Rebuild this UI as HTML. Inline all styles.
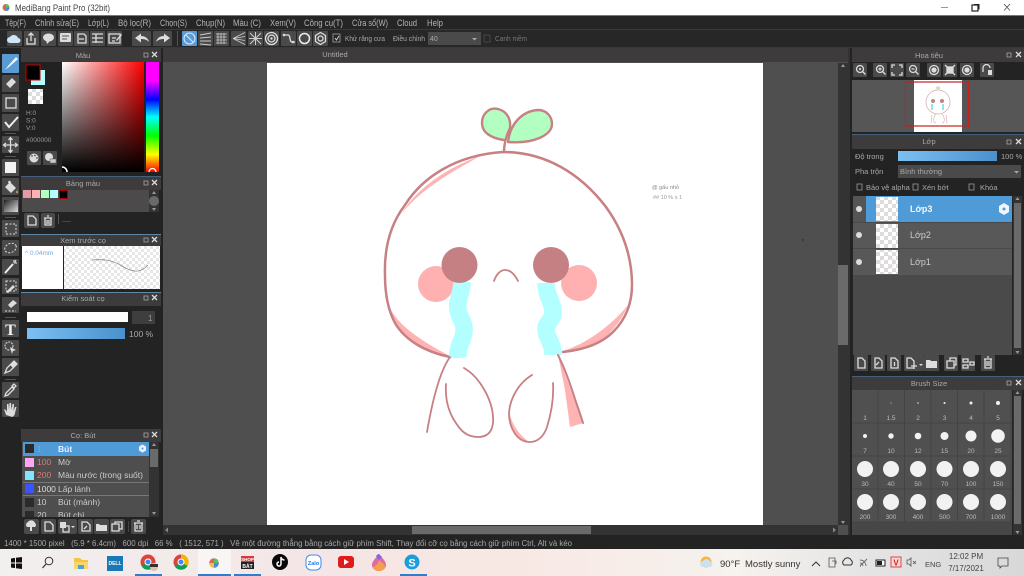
<!DOCTYPE html>
<html><head><meta charset="utf-8"><title>MediBang Paint Pro</title>
<style>
html,body{margin:0;padding:0;background:#222;width:1024px;height:576px;overflow:hidden}
svg{display:block;filter:blur(.3px)}
text{font-family:"Liberation Sans","Noto Sans CJK SC",sans-serif;font-size:8px;fill:#aaa}
.m{font-size:9px;fill:#b4b4b4}
.h{font-size:7.5px;fill:#aaa;text-anchor:middle}
.l{font-size:7.5px;fill:#a8a8a8}
.b{fill:#4a4a4a}
.i{fill:none;stroke:#ddd;stroke-width:1.3}
.f{fill:#ddd}
.t{font-size:6.5px;fill:#bbb;text-anchor:middle}
.c{fill:#f2f2f2}
.e{fill:#3d3b3b}
.o{fill:none;stroke:#c78083;stroke-linecap:round;stroke-linejoin:round}
</style></head><body>
<svg width="1024" height="576" viewBox="0 0 1024 576" xmlns="http://www.w3.org/2000/svg">
<defs>
<pattern id="ck" width="8" height="8" patternUnits="userSpaceOnUse"><rect width="8" height="8" fill="#fff"/><rect width="4" height="4" fill="#ddd"/><rect x="4" y="4" width="4" height="4" fill="#ddd"/></pattern>
<pattern id="ck2" width="6" height="6" patternUnits="userSpaceOnUse"><rect width="6" height="6" fill="#fff"/><rect width="3" height="3" fill="#e6e6e6"/><rect x="3" y="3" width="3" height="3" fill="#e6e6e6"/></pattern>
<linearGradient id="wr" x1="0" x2="1" y1="0" y2="0"><stop offset="0" stop-color="#fff"/><stop offset="1" stop-color="#f00"/></linearGradient>
<linearGradient id="kb" x1="0" x2="0" y1="0" y2="1"><stop offset="0" stop-color="#000" stop-opacity="0"/><stop offset="1" stop-color="#000"/></linearGradient>
<linearGradient id="hue" x1="0" x2="0" y1="0" y2="1"><stop offset="0" stop-color="#f0f"/><stop offset=".17" stop-color="#f0f"/><stop offset=".34" stop-color="#00f"/><stop offset=".5" stop-color="#0ff"/><stop offset=".67" stop-color="#0f0"/><stop offset=".84" stop-color="#ff0"/><stop offset="1" stop-color="#f00"/></linearGradient>
<linearGradient id="bl" x1="0" x2="1" y1="0" y2="0"><stop offset="0" stop-color="#7cc0f2"/><stop offset="1" stop-color="#4a90cc"/></linearGradient>
<linearGradient id="gr" x1="0" x2="1" y1="0" y2="1"><stop offset="0" stop-color="#222"/><stop offset="1" stop-color="#ddd"/></linearGradient>
<linearGradient id="tb" x1="0" x2="1" y1="0" y2="0"><stop offset="0" stop-color="#f2efef"/><stop offset=".3" stop-color="#f4e6e6"/><stop offset=".5" stop-color="#f8e8e4"/><stop offset=".72" stop-color="#f6f2ee"/><stop offset=".85" stop-color="#e4e4e4"/><stop offset="1" stop-color="#d8d8d8"/></linearGradient>
</defs>

<!-- base -->
<rect width="1024" height="576" fill="#232323"/>
<!-- title bar -->
<rect width="1024" height="15" fill="#fff"/>
<rect y="15" width="1024" height="1" fill="#777"/>
<circle cx="6" cy="7.5" r="3.5" fill="#e2644a"/><path d="M6 4a3.5 3.5 0 0 1 3.5 3.5H6z" fill="#5cbf6a"/><path d="M6 7.5h3.5A3.5 3.5 0 0 1 6 11z" fill="#3e8fd8"/>
<text x="15" y="11" style="font-size:9px;fill:#444" textLength="95" lengthAdjust="spacingAndGlyphs">MediBang Paint Pro (32bit)</text>
<path d="M941 7.5h7" stroke="#999" stroke-width="1"/>
<rect x="972" y="5" width="6" height="6" fill="none" stroke="#222" stroke-width="1.2"/><path d="M974 4.5h5v5" fill="none" stroke="#222"/>
<path d="M1004 4l6 6.500M1010 4l-6 6.500" stroke="#555" stroke-width=".9"/>

<!-- menu -->
<rect y="16" width="1024" height="13" fill="#252525"/>
<rect y="29" width="1024" height="1" fill="#3a3a3a"/>
<text class="m" x="5" y="26" textLength="21" lengthAdjust="spacingAndGlyphs">Tệp(F)</text><text class="m" x="35" y="26" textLength="44" lengthAdjust="spacingAndGlyphs">Chỉnh sửa(E)</text><text class="m" x="88" y="26" textLength="21" lengthAdjust="spacingAndGlyphs">Lớp(L)</text><text class="m" x="118" y="26" textLength="33" lengthAdjust="spacingAndGlyphs">Bộ lọc(R)</text><text class="m" x="160" y="26" textLength="27" lengthAdjust="spacingAndGlyphs">Chọn(S)</text><text class="m" x="196" y="26" textLength="29" lengthAdjust="spacingAndGlyphs">Chụp(N)</text><text class="m" x="233" y="26" textLength="28" lengthAdjust="spacingAndGlyphs">Màu (C)</text><text class="m" x="270" y="26" textLength="26" lengthAdjust="spacingAndGlyphs">Xem(V)</text><text class="m" x="304" y="26" textLength="39" lengthAdjust="spacingAndGlyphs">Công cụ(T)</text><text class="m" x="352" y="26" textLength="36" lengthAdjust="spacingAndGlyphs">Cửa sổ(W)</text><text class="m" x="397" y="26" textLength="20" lengthAdjust="spacingAndGlyphs">Cloud</text><text class="m" x="427" y="26" textLength="16" lengthAdjust="spacingAndGlyphs">Help</text>

<!-- toolbar -->
<rect y="30" width="1024" height="17" fill="#272727"/>
<rect x="7" y="31" width="15" height="15" class="b" rx="1"/><path d="M10 43a3 3 0 0 1 0-6 4.500 4.500 0 0 1 8 1 2.500 2.500 0 0 1 0 5z" fill="#cfe4f5"/>
<rect x="24" y="31" width="15" height="15" class="b" rx="1"/><path d="M27 38v6h8v-6M31 41v-8M28.500 35.500l2.500-2.500 2.500 2.500" class="i"/>
<rect x="41" y="31" width="15" height="15" class="b" rx="1"/><ellipse cx="48.500" cy="37.500" rx="5.500" ry="4" class="f"/><path d="M46 40l1 4 3-3z" class="f"/>
<rect x="58" y="31" width="15" height="15" class="b" rx="1"/><rect x="60" y="33" width="11" height="9" class="f" rx="1"/><path d="M62 36h7M62 39h5" stroke="#555"/>
<rect x="74" y="31" width="15" height="15" class="b" rx="1"/><path d="M78 34h6l2 2v7h-8zM79 39h5" class="i" stroke-width="1"/>
<rect x="90" y="31" width="15" height="15" class="b" rx="1"/><path d="M92 34h11M92 38h11M92 42h11M96 34v9" class="i" stroke-width="1"/>
<rect x="107" y="31" width="15" height="15" class="b" rx="1"/><path d="M109 34h11v9h-11zM112 38h4M112 41h3" class="i" stroke-width="1"/><path d="M116 40l5-6 1 1-5 6z" class="f"/>
<rect x="132" y="31" width="19" height="15" class="b" rx="1"/><path d="M135 38l6-4.500v2.500c4 0 7 2 8 6-2-2-4-3-8-3v3.500z" class="f"/>
<rect x="153" y="31" width="19" height="15" class="b" rx="1"/><path d="M170 38l-6-4.500v2.500c-4 0-7 2-8 6 2-2 4-3 8-3v3.500z" class="f"/>
<rect x="177" y="31" width="1" height="15" fill="#456"/>
<rect x="182" y="31" width="15" height="15" fill="#5b9bd5" rx="1"/><circle cx="189.500" cy="38.500" r="5.500" fill="none" stroke="#dceaf7"/><path d="M185.500 34.500l8 8" stroke="#dceaf7"/>
<rect x="198" y="31" width="15" height="15" class="b" rx="1"/><path d="M200 35l11-2M200 38l11-1M200 41l11 0M200 44l11 1" stroke="#ccc"/>
<rect x="214" y="31" width="15" height="15" class="b" rx="1"/><path d="M216 34h11M216 37h11M216 40h11M216 43h11M218 33v11M221 33v11M224 33v11" stroke="#ccc" stroke-width=".8"/>
<rect x="231" y="31" width="15" height="15" class="b" rx="1"/><path d="M233 38.500l12-6M233 38.500l12-2M233 38.500l12 2M233 38.500l12 6" stroke="#ccc" stroke-width=".8"/>
<rect x="248" y="31" width="15" height="15" class="b" rx="1"/><path d="M250 33l11 11M261 33l-11 11M255.500 32v13M249 38.500h13" stroke="#ccc"/>
<rect x="264" y="31" width="15" height="15" class="b" rx="1"/><circle cx="271.500" cy="38.500" r="6" class="i" stroke-width=".9"/><circle cx="271.500" cy="38.500" r="3.500" class="i" stroke-width=".9"/><circle cx="271.500" cy="38.500" r="1.200" class="f"/>
<rect x="281" y="31" width="15" height="15" class="b" rx="1"/><path d="M283 35h5c3 0 1 7 4 7h3" class="i"/><circle cx="284" cy="35" r="1.300" class="f"/><circle cx="293" cy="42" r="1.300" class="f"/>
<rect x="297" y="31" width="15" height="15" class="b" rx="1"/><circle cx="304.500" cy="38.500" r="5" fill="none" stroke="#eee" stroke-width="1.500"/>
<rect x="313" y="31" width="15" height="15" class="b" rx="1"/><path d="M320.500 32.500l5 3v6l-5 3-5-3v-6z" class="i"/><circle cx="320.500" cy="38.500" r="2.500" class="i"/>
<rect x="333" y="34" width="7" height="8" fill="none" stroke="#888"/><path d="M335 38l1.500 2 2.500-4" stroke="#ccc" fill="none"/>
<text x="345" y="41" class="l" textLength="40" lengthAdjust="spacingAndGlyphs">Khử răng cưa</text><text x="393" y="41" class="l" textLength="32" lengthAdjust="spacingAndGlyphs">Điều chỉnh</text>
<rect x="428" y="32" width="53" height="13" fill="#4a4a4a"/><text x="430" y="41" style="font-size:7px;fill:#aaa">40</text><path d="M472 38h5l-2.500 2.500z" fill="#aaa"/>
<rect x="484" y="35" width="6" height="7" fill="none" stroke="#444"/><text x="495" y="41" style="font-size:7.500px;fill:#777" textLength="32" lengthAdjust="spacingAndGlyphs">Canh mềm</text>
<rect y="47" width="1024" height="1" fill="#393939"/>

<!-- center area -->
<rect x="163" y="48" width="687" height="487" fill="#4f4f4f"/>
<rect x="163" y="48" width="687" height="14" fill="#3d3b3b"/>
<text class="h" x="335" y="57">Untitled</text>
<rect x="267" y="63" width="496" height="462" fill="#fff"/>
<rect x="848" y="48" width="2" height="487" fill="#333"/>
<rect x="838" y="63" width="10" height="462" fill="#333"/>
<rect x="838" y="265" width="10" height="80" fill="#6a6a6a"/>
<path d="M843 64l-2 3h4z" fill="#999"/><path d="M843 524l-2-3h4z" fill="#999"/>
<rect x="163" y="525" width="675" height="10" fill="#333"/>
<rect x="412" y="526" width="179" height="8" fill="#6a6a6a"/>
<path d="M165 530l3-2.500v5z" fill="#888"/><path d="M836 530l-3-2.500v5z" fill="#888"/>
<circle cx="803" cy="240" r=".7" fill="#222"/>

<!-- drawing -->
<g>
<!-- pink shades -->
<path d="M387 300C392 318 408 334 450 356 426 352 404 340 394 322 390 314 387 306 387 300z" fill="#ffb3b3"/>
<path d="M402 213C412 195 440 170 480 156 460 168 425 185 402 213z" fill="#ffb3b3"/>
<path d="M562 351C585 345 612 325 628 305 622 320 612 332 600 342 588 348 575 350 562 351z" fill="#ffb3b3"/>
<path d="M558 355l25 68-13 4-5-37z" fill="#ffb3b3"/>
<path d="M509 412c0 16 6 28 22 31-10-6-18-16-22-31z" fill="#ffb3b3"/>
<!-- leaves -->
<path d="M505 140c-14-2-23-8-23-17 0-10 8-16 16-14 8 2 13 9 12 18z" fill="#b3ffc1"/>
<path d="M508 142c2-18 14-31 30-32 9 0 14 7 14 14 0 11-18 20-44 18z" fill="#b3ffc1"/>
<path class="o" stroke-width="2.400" d="M504 140c-14-2-22-8-22-17 0-10 8-16 16-14 8 2 13 9 12 18"/>
<path class="o" stroke-width="2.400" d="M508 142c2-18 14-31 30-32 9 0 14 7 14 14 0 11-18 20-44 18z"/>
<path class="o" stroke-width="2.400" d="M504 152c0-9 2-16 6-24"/>
<!-- head -->
<path class="o" stroke-width="2.500" d="M450 357C425 352 405 340 395 323 388 310 385 295 385 275 384 245 392 222 405 205 422 178 455 155 503 152 545 152 580 173 606 207 624 232 632 258 632 285 632 305 625 320 613 332 600 345 582 350 563 352"/>
<!-- cheeks -->
<circle cx="436" cy="284" r="18" fill="#ffb0b0"/>
<circle cx="579" cy="283" r="18" fill="#ffb0b0"/>
<!-- tears -->
<path d="M462 282C462 295 456 300 458 310 460 320 465 322 464 332 463 342 457 345 458 358" fill="none" stroke="#b3ffff" stroke-width="17.500"/>
<path d="M546 283C546 296 553 302 553 312 553 321 546 322 546 329 546 338 553 342 553 355" fill="none" stroke="#b3ffff" stroke-width="17.500"/>
<!-- eyes -->
<circle cx="459.500" cy="265" r="18" fill="#c58084"/>
<circle cx="551" cy="265" r="18" fill="#c58084"/>
<path class="o" stroke-width="1.800" d="M494 281c2-6 6-11 11-11 6 0 10 5 13 11"/>
<!-- legs -->
<path class="o" stroke-width="1.800" d="M450 357c-10 14-17 40-23 75"/>
<path class="o" stroke-width="1.800" d="M446 384c-1 15 2 26 8 36 6 10 12 17 24 17 9 0 14-5 15-14 1-14-4-26-11-37-5-8-11-14-18-18"/>
<path class="o" stroke-width="1.800" d="M532 375c-12 7-22 22-23 38 0 15 8 29 21 29 8 0 14-6 17-15 4-13 7-28 6-44"/>
<path class="o" stroke-width="2" d="M558 355c6 12 12 28 17 44 3 9 6 17 8 24"/>
<text x="652" y="189" style="font-size:5.500px;fill:#888">@ gấu nhỏ</text>
<text x="653" y="199" style="font-size:5.500px;fill:#999">## 10 % s 1</text>
</g>

<!-- left tools -->
<rect x="2" y="54" width="17" height="19" fill="#5b9bd5" rx="1"/><path d="M5 70l3-4 8-9 2 2-9 8z" fill="#f2f6fa"/>
<rect x="2" y="75" width="17" height="17" class="b" rx="1"/><path d="M6 84l6-6 4 4-6 6z" class="f"/>
<rect x="2" y="94" width="17" height="18" class="b" rx="1"/><rect x="6" y="98" width="10" height="10" class="i"/>
<rect x="2" y="114" width="17" height="17" class="b" rx="1"/><path d="M5 122l4 5 9-10" fill="none" stroke="#eee" stroke-width="2"/>
<rect x="5" y="133" width="11" height="1" fill="#555"/>
<rect x="2" y="136" width="17" height="17" class="b" rx="1"/><path d="M10.500 137.500v15M3.500 145h14M8.500 140l2-2.500 2 2.500M8.500 150l2 2.500 2-2.500M6 143l-2.500 2 2.500 2M15 143l2.500 2-2.500 2" class="i"/>
<rect x="5" y="156" width="11" height="1" fill="#555"/>
<rect x="2" y="159" width="17" height="17" class="b" rx="1"/><rect x="5" y="162" width="11" height="11" class="c"/>
<rect x="2" y="178" width="17" height="17" class="b" rx="1"/><path d="M5 187l5-5 6 6-5 5zM8 183c0-3 3-3 3 0" class="f"/><path d="M17 190c1 2 1 3 0 3s-1-1 0-3z" fill="#e9b565"/>
<rect x="2" y="197" width="17" height="18" class="b" rx="1"/><rect x="4" y="200" width="14" height="12" fill="url(#gr)"/>
<rect x="5" y="217" width="11" height="1" fill="#555"/>
<rect x="2" y="220" width="17" height="17" class="b" rx="1"/><rect x="6" y="224" width="10" height="10" fill="none" stroke="#ddd" stroke-dasharray="2 1.500"/>
<rect x="2" y="240" width="17" height="16" class="b" rx="1"/><ellipse cx="10.500" cy="248" rx="6" ry="4.500" fill="none" stroke="#ddd" stroke-dasharray="2 1.500" transform="rotate(-25 10.500 248)"/>
<rect x="2" y="259" width="17" height="16" class="b" rx="1"/><path d="M5 273l8-9" stroke="#eee" stroke-width="2"/><path d="M14 260v3M17 263h-3M16 260l-1 2" stroke="#eee"/>
<rect x="2" y="278" width="17" height="16" class="b" rx="1"/><rect x="6" y="281" width="10" height="10" fill="none" stroke="#ddd" stroke-dasharray="2 1.500"/><path d="M6 292l7-7 2 2-7 6z" class="f"/>
<rect x="2" y="297" width="17" height="16" class="b" rx="1"/><path d="M8 305l5-5 4 3-6 5z" class="f"/><path d="M5 311h11" stroke="#ddd" stroke-dasharray="2 1.500"/>
<rect x="5" y="317" width="11" height="1" fill="#555"/>
<rect x="2" y="320" width="17" height="17" class="b" rx="1"/><text x="10.500" y="335" style="font-family:'Liberation Serif',serif;font-size:16px;font-weight:bold;fill:#f2f2f2;text-anchor:middle">T</text>
<rect x="2" y="340" width="17" height="16" class="b" rx="1"/><circle cx="9" cy="346" r="4" fill="none" stroke="#ddd" stroke-dasharray="2 1"/><path d="M10 347l6 3-3 1-1 3z" class="f"/>
<rect x="2" y="358" width="17" height="18" class="b" rx="1"/><path d="M5 373l2-5 7-7 3 3-7 7z" class="i"/><path d="M10 365l4-4 3 3-4 4z" class="f"/>
<rect x="5" y="379" width="11" height="1" fill="#555"/>
<rect x="2" y="382" width="17" height="16" class="b" rx="1"/><path d="M5 396l1-3 6-6 2 2-6 6zM12 386l2-2 2 2-2 2z" class="i"/>
<rect x="2" y="400" width="17" height="17" class="b" rx="1"/><path d="M6 415l-2-6 2 1 1 2 0-8h1.500l.5 6 .5-7h1.500l.5 7 1-6h1.500l-.5 7 1.500-4h1.500l-2 8-2 2z" class="f"/>

<!-- Màu panel -->
<rect x="21" y="48" width="140" height="14" class="e"/>
<text class="h" x="83" y="58">Màu</text>
<path d="M144 53h4v4h-4z" fill="none" stroke="#aaa" stroke-width=".8"/><path d="M152 52l5 5M157 52l-5 5" stroke="#ddd" stroke-width="1.300"/>
<rect x="21" y="62" width="140" height="114" fill="#222"/>
<rect x="31" y="70" width="14" height="15" fill="#b3ffff"/>
<rect x="26" y="65" width="14" height="15" fill="#000" stroke="#c00" stroke-width="1"/>
<rect x="28" y="89" width="15" height="15" fill="url(#ck)"/>
<text x="26" y="115" style="font-size:6.500px;fill:#999">H:0</text><text x="26" y="122.500" style="font-size:6.500px;fill:#999">S:0</text><text x="26" y="130" style="font-size:6.500px;fill:#999">V:0</text>
<text x="26" y="142" style="font-size:6.500px;fill:#999">#000000</text>
<rect x="27" y="151" width="14" height="14" class="b" rx="1"/><circle cx="34" cy="158" r="4.500" class="f"/><circle cx="32" cy="156" r=".9" fill="#555"/><circle cx="35" cy="155.500" r=".9" fill="#555"/><circle cx="37" cy="158" r=".9" fill="#555"/>
<rect x="43" y="151" width="14" height="14" class="b" rx="1"/><circle cx="49" cy="157" r="4" class="f"/><rect x="50" y="159" width="6" height="4" fill="#ccc" stroke="#555" stroke-width=".5"/>
<rect x="62" y="62" width="82" height="110" fill="url(#wr)"/><rect x="62" y="62" width="82" height="110" fill="url(#kb)"/>
<path d="M62 167a5 5 0 0 1 5 5" fill="none" stroke="#fff" stroke-width="1.500"/>
<rect x="146" y="62" width="13" height="110" fill="url(#hue)"/>
<path d="M149 172a3.500 3.500 0 0 1 7 0" fill="none" stroke="#fff" stroke-width="1.300"/>
<rect x="21" y="176" width="140" height="1" fill="#44607a"/>

<!-- Palette -->
<rect x="21" y="177" width="140" height="13" class="e"/>
<text class="h" x="83" y="186">Bảng màu</text>
<path d="M144 181h4v4h-4z" fill="none" stroke="#aaa" stroke-width=".8"/><path d="M152 180l5 5M157 180l-5 5" stroke="#ddd" stroke-width="1.300"/>
<rect x="22" y="190" width="127" height="22" fill="#4c4a4a"/>
<rect x="23" y="190" width="8" height="8" fill="#e39aa2"/><rect x="32" y="190" width="8" height="8" fill="#ffb0b0"/><rect x="41" y="190" width="8" height="8" fill="#b3ffc1"/><rect x="50" y="190" width="8" height="8" fill="#b3ffff"/><rect x="59.500" y="190.500" width="8" height="8" fill="#000" stroke="#a00"/>
<rect x="149" y="190" width="10" height="22" fill="#333"/><circle cx="154" cy="201" r="5" fill="#6a6a6a"/><path d="M154 191l-2 3h4zM154 211l-2-3h4z" fill="#999"/>
<rect x="24" y="213" width="15" height="15" class="b" rx="2"/><path d="M28 216h5l3 3v6h-8z" class="i"/>
<rect x="41" y="213" width="14" height="15" class="b" rx="2"/><path d="M44 218h8M45 218v7h6v-7M47 216h2M47 220v4M49 220v4" class="i" stroke-width="1"/>
<rect x="58" y="214" width="1" height="10" fill="#555"/><rect x="62" y="221" width="9" height="1" fill="#444"/>
<rect x="21" y="234" width="140" height="1" fill="#5d87a8"/>

<!-- Preview -->
<rect x="21" y="235" width="140" height="11" class="e"/>
<text class="h" x="83" y="243">Xem trước cọ</text>
<path d="M144 238h4v4h-4z" fill="none" stroke="#aaa" stroke-width=".8"/><path d="M152 237l5 5M157 237l-5 5" stroke="#ddd" stroke-width="1.300"/>
<rect x="22" y="246" width="41" height="43" fill="#fff"/>
<rect x="64" y="246" width="96" height="43" fill="url(#ck2)"/>
<text x="25" y="255" style="font-size:6.500px;fill:#7aa9d4">^ 0.04mm</text>
<path d="M92 260c12-1 20 0 30 6 10 6 18 8 26-1" fill="none" stroke="#8a8a8a" stroke-width=".8"/>
<rect x="21" y="292" width="140" height="1" fill="#5d87a8"/>

<!-- Control -->
<rect x="21" y="293" width="140" height="13" class="e"/>
<text class="h" x="83" y="301">Kiểm soát cọ</text>
<path d="M144 296h4v4h-4z" fill="none" stroke="#aaa" stroke-width=".8"/><path d="M152 295l5 5M157 295l-5 5" stroke="#ddd" stroke-width="1.300"/>
<rect x="27" y="312" width="101" height="10" fill="#fff"/>
<rect x="132" y="311" width="23" height="13" fill="#3e3e3e"/><text x="148" y="321" style="font-size:8px;fill:#999">1</text>
<rect x="27" y="328" width="98" height="11" fill="url(#bl)"/>
<text x="129" y="337" style="font-size:8.500px;fill:#aaa">100 %</text>

<!-- Brush list -->
<rect x="21" y="429" width="140" height="13" class="e"/>
<text class="h" x="83" y="438">Cọ: Bút</text>
<path d="M144 433h4v4h-4z" fill="none" stroke="#aaa" stroke-width=".8"/><path d="M152 432l5 5M157 432l-5 5" stroke="#ddd" stroke-width="1.300"/>
<rect x="22" y="442" width="127" height="75" fill="#4e4e4e"/>
<rect x="23" y="442" width="126" height="14" fill="#4f9bd8"/>
<rect x="25" y="444" width="9" height="9" fill="#2b2b2b"/><text x="37" y="452" style="font-size:8.500px;fill:#e878a8">1</text><text x="58" y="452" style="font-size:8.500px;font-weight:bold;fill:#eef">Bút</text>
<path d="M142.500 445l3 1.800v3.400l-3 1.800-3-1.800v-3.400z" fill="#eef" stroke="#eef"/><circle cx="142.500" cy="448.500" r="1" fill="#4f9bd8"/>
<rect x="25" y="458" width="9" height="9" fill="#ffa6f4"/><text x="37" y="465" style="font-size:8.500px;fill:#d97a72">100</text><text x="58" y="465" style="font-size:8.500px;fill:#ccc">Mờ</text>
<rect x="25" y="471" width="9" height="9" fill="#84e4ff"/><text x="37" y="478" style="font-size:8.500px;fill:#e07a72">200</text><text x="58" y="478" style="font-size:8.500px;fill:#ccc">Màu nước (trong suốt)</text>
<rect x="23" y="482" width="126" height="1" fill="#777"/>
<rect x="25" y="484" width="9" height="9" fill="#3a55ff"/><text x="37" y="492" style="font-size:8.500px;fill:#ddd">1000</text><text x="58" y="492" style="font-size:8.500px;fill:#ccc">Lấp lánh</text>
<rect x="23" y="495" width="126" height="1" fill="#777"/>
<rect x="25" y="498" width="9" height="9" fill="#2b2b2b"/><text x="37" y="505" style="font-size:8.500px;fill:#ccc">10</text><text x="58" y="505" style="font-size:8.500px;fill:#ccc">Bút (mảnh)</text>
<rect x="25" y="511" width="9" height="9" fill="#2b2b2b"/><text x="37" y="518" style="font-size:8.500px;fill:#ccc">20</text><text x="58" y="518" style="font-size:8.500px;fill:#ccc">Bút chì</text>
<rect x="149" y="442" width="10" height="75" fill="#333"/><rect x="150" y="449" width="8" height="18" fill="#6a6a6a"/><path d="M154 443l-2 3h4zM154 515l-2-3h4z" fill="#999"/>
<rect x="21" y="517" width="140" height="18" fill="#232323"/>
<rect x="24" y="519" width="15" height="15" class="b" rx="2"/><path d="M27 527a3 3 0 0 1 1-5 4 4 0 0 1 7 1 2.500 2.500 0 0 1 0 4h-3v4h-2v-4z" class="f"/>
<rect x="41" y="519" width="15" height="15" class="b" rx="2"/><path d="M45 522h5l3 3v6h-8z" class="i" stroke-width="1"/>
<rect x="58" y="519" width="19" height="15" class="b" rx="2"/><rect x="60" y="522" width="6" height="6" class="f"/><rect x="63" y="526" width="6" height="6" class="i" stroke-width=".8"/><path d="M71 526h4l-2 2z" class="f"/>
<rect x="78" y="519" width="15" height="15" class="b" rx="2"/><path d="M82 522h5l3 3v6h-8zM84 529l3-3" class="i" stroke-width="1"/>
<rect x="94" y="519" width="15" height="15" class="b" rx="2"/><path d="M96 524h3l1 1h7v6H96z" class="f"/>
<rect x="110" y="519" width="15" height="15" class="b" rx="2"/><path d="M112 524h7v7h-7zM115 524v-2h7v7h-3" class="i" stroke-width=".9"/>
<rect x="128" y="521" width="1" height="11" fill="#444"/>
<rect x="131" y="519" width="15" height="15" class="b" rx="2"/><path d="M134 523h9M135 523v8h7v-8M137 521h3M137 525v4M140 525v4" class="i" stroke-width="1"/>

<!-- Right: Navigator -->
<rect x="850" y="48" width="174" height="487" fill="#232323"/>
<rect x="852" y="48" width="172" height="14" class="e"/>
<text class="h" x="929" y="58">Hoa tiêu</text>
<path d="M1007 53h4v4h-4z" fill="none" stroke="#aaa" stroke-width=".8"/><path d="M1016 52l5 5M1021 52l-5 5" stroke="#ddd" stroke-width="1.300"/>
<g class="i" stroke-width="1">
<rect x="853" y="63" width="14" height="14" fill="#4a4a4a" stroke="none" rx="1"/><circle cx="860" cy="69" r="3.500"/><path d="M862.500 71.500l3 3M859 69h2M860 68v2"/>
<rect x="873" y="63" width="14" height="14" fill="#4a4a4a" stroke="none" rx="1"/><circle cx="880" cy="69" r="3.500"/><path d="M882.500 71.500l3 3M878.500 69h3M880 67.500v3"/>
<rect x="890" y="63" width="14" height="14" fill="#4a4a4a" stroke="none" rx="1"/><path d="M892 68v-3h3M902 68v-3h-3M892 72v3h3M902 72v3h-3"/>
<rect x="906" y="63" width="14" height="14" fill="#4a4a4a" stroke="none" rx="1"/><circle cx="913" cy="69" r="3.500"/><path d="M915.500 71.500l3 3M911.500 69h3"/>
<rect x="927" y="63" width="14" height="14" fill="#4a4a4a" stroke="none" rx="1"/><circle cx="934" cy="70" r="4.500"/><circle cx="934" cy="70" r="2" fill="#ddd"/>
<rect x="943" y="63" width="14" height="14" fill="#4a4a4a" stroke="none" rx="1"/><rect x="947" y="67" width="6" height="6" fill="#ddd"/><path d="M945 65l2 2M955 65l-2 2M945 75l2-2M955 75l-2-2"/>
<rect x="960" y="63" width="14" height="14" fill="#4a4a4a" stroke="none" rx="1"/><circle cx="967" cy="70" r="4.500"/><circle cx="967" cy="70" r="2" fill="#ddd"/>
<rect x="980" y="63" width="14" height="14" fill="#4a4a4a" stroke="none" rx="1"/><path d="M983 72v-4a3.500 3.500 0 0 1 7 0"/><rect x="988" y="70" width="4" height="5" fill="#ddd" stroke="none"/>
</g>
<rect x="852" y="80" width="172" height="52" fill="#565656"/>
<rect x="914" y="80" width="48" height="52" fill="#fff"/>
<rect x="905.500" y="82" width="63" height="44" fill="none" stroke="#c82020" stroke-width="1.200"/>
<circle cx="938" cy="102" r="12" fill="none" stroke="#d8a8aa" stroke-width=".7"/>
<path d="M935 88l3 2 3-2-3-2z" fill="#bfe6c6"/>
<circle cx="933" cy="101" r="2" fill="#c58084"/><circle cx="942" cy="101" r="2" fill="#c58084"/><path d="M932 104v6M943 104v6" stroke="#8fe8ea" stroke-width="2"/>
<path d="M932 115l-1 8M936 114c-3 3-3 9 0 9M942 114c3 3 3 9 0 9M946 115l1 8" stroke="#d8a8aa" fill="none" stroke-width=".6"/>

<!-- Layers -->
<rect x="852" y="134" width="172" height="1" fill="#44607a"/>
<rect x="852" y="135" width="172" height="14" class="e"/>
<text class="h" x="929" y="144">Lớp</text>
<path d="M1007 140h4v4h-4z" fill="none" stroke="#aaa" stroke-width=".8"/><path d="M1016 139l5 5M1021 139l-5 5" stroke="#ddd" stroke-width="1.300"/>
<text x="855" y="159" class="l">Độ trong</text>
<rect x="898" y="151" width="99" height="10" fill="url(#bl)"/>
<text x="1001" y="159" class="l">100 %</text>
<text x="855" y="174" class="l">Pha trộn</text>
<rect x="898" y="165" width="123" height="13" fill="#4a4a4a"/>
<text x="900" y="174" class="l">Bình thường</text><path d="M1014 171h5l-2.500 2.500z" fill="#aaa"/>
<rect x="857" y="184" width="5" height="6" fill="none" stroke="#999" stroke-width=".8"/><text x="866" y="190" class="l">Bảo vệ alpha</text>
<rect x="913" y="184" width="5" height="6" fill="none" stroke="#999" stroke-width=".8"/><text x="922" y="190" class="l">Xén bớt</text>
<rect x="969" y="184" width="5" height="6" fill="none" stroke="#999" stroke-width=".8"/><text x="980" y="190" class="l">Khóa</text>
<rect x="853" y="196" width="159" height="159" fill="#4a4a4a"/>
<rect x="853" y="196" width="13" height="26" fill="#555"/><rect x="866" y="196" width="146" height="26" fill="#4f9bd8"/>
<rect x="876" y="197" width="22" height="24" fill="url(#ck)"/>
<circle cx="859" cy="209" r="3" fill="#ddd"/>
<text x="910" y="212" style="font-size:9px;font-weight:bold;fill:#f2f6fa">Lớp3</text>
<path d="M1004 203l5 3v6l-5 3-5-3v-6z" fill="#f2f6fa"/><circle cx="1004" cy="209" r="1.500" fill="#4f9bd8"/>
<rect x="853" y="223" width="159" height="25" fill="#585858"/>
<rect x="876" y="224" width="22" height="24" fill="url(#ck)"/>
<circle cx="859" cy="235" r="3" fill="#ddd"/><text x="910" y="238" style="font-size:9px;fill:#ccc">Lớp2</text>
<rect x="853" y="249" width="159" height="26" fill="#585858"/>
<rect x="876" y="250" width="22" height="24" fill="url(#ck)"/><circle cx="887" cy="262" r="7" fill="none" stroke="#d8c8c8" stroke-width=".5"/>
<circle cx="859" cy="262" r="3" fill="#ddd"/><text x="910" y="265" style="font-size:9px;fill:#ccc">Lớp1</text>
<rect x="1013" y="196" width="9" height="159" fill="#333"/><rect x="1014" y="203" width="7" height="145" fill="#6a6a6a"/><path d="M1017.500 197l-2 3h4zM1017.500 354l-2-3h4z" fill="#999"/>
<g class="i" stroke-width="1">
<rect x="854" y="355" width="14" height="16" fill="#4a4a4a" stroke="none" rx="1"/><path d="M858 358h4l3 3v7h-7z"/>
<rect x="871" y="355" width="14" height="16" fill="#4a4a4a" stroke="none" rx="1"/><path d="M875 358h4l3 3v7h-7zM876 365l3-3"/>
<rect x="887" y="355" width="14" height="16" fill="#4a4a4a" stroke="none" rx="1"/><path d="M891 358h4l3 3v7h-7zM894.500 362v4"/>
<rect x="904" y="355" width="20" height="16" fill="#4a4a4a" stroke="none" rx="1"/><path d="M907 358h4l3 3v7h-7zM911 366h6M914 363v6"/><path d="M919 364h4l-2 2z" fill="#ddd" stroke="none"/>
<rect x="924" y="355" width="15" height="16" fill="#4a4a4a" stroke="none" rx="1"/><path d="M926 360h4l1 1h6v7h-11z" fill="#ddd" stroke="none"/>
<rect x="944" y="355" width="14" height="16" fill="#4a4a4a" stroke="none" rx="1"/><path d="M947 361h7v7h-7zM950 361v-3h6v7h-2"/>
<rect x="961" y="355" width="14" height="16" fill="#4a4a4a" stroke="none" rx="1"/><path d="M963 359h5v3h-5zM963 365h5v3h-5zM970 362h4v3h-4z"/>
<rect x="981" y="355" width="14" height="16" fill="#4a4a4a" stroke="none" rx="1"/><path d="M984 359h8M985 359v9h6v-9M987 357h2M987 361v5M989 361v5"/>
</g>

<!-- Brush Size -->
<rect x="852" y="376" width="172" height="1" fill="#44607a"/>
<rect x="852" y="377" width="172" height="13" class="e"/>
<text class="h" x="929" y="386">Brush Size</text>
<path d="M1007 381h4v4h-4z" fill="none" stroke="#aaa" stroke-width=".8"/><path d="M1016 380l5 5M1021 380l-5 5" stroke="#ddd" stroke-width="1.300"/>
<rect x="852" y="390" width="160" height="145" fill="#505050"/>
<rect x="852" y="522" width="160" height="13" fill="#474747"/>
<path d="M878 390v132M904.500 390v132M931 390v132M957.500 390v132M984 390v132M1011 390v132M852 423h159M852 456h159M852 489h159M852 522h159" stroke="#444" stroke-width="1"/>
<rect x="1013" y="390" width="9" height="145" fill="#333"/><rect x="1014" y="396" width="7" height="128" fill="#6a6a6a"/><path d="M1017.500 391l-2 3h4zM1017.500 534l-2-3h4z" fill="#999"/>
<circle cx="891" cy="403" r=".5" class="c"/><circle cx="918" cy="403" r=".7" class="c"/><circle cx="944.500" cy="403" r="1" class="c"/><circle cx="971" cy="403" r="1.500" class="c"/><circle cx="998" cy="403" r="2" class="c"/>
<circle cx="865" cy="436" r="2" class="c"/><circle cx="891" cy="436" r="2.700" class="c"/><circle cx="918" cy="436" r="3.300" class="c"/><circle cx="944.500" cy="436" r="4" class="c"/><circle cx="971" cy="436" r="5.500" class="c"/><circle cx="998" cy="436" r="6.800" class="c"/>
<circle cx="865" cy="469" r="8" class="c"/><circle cx="891" cy="469" r="8" class="c"/><circle cx="918" cy="469" r="8" class="c"/><circle cx="944.500" cy="469" r="8" class="c"/><circle cx="971" cy="469" r="8" class="c"/><circle cx="998" cy="469" r="8" class="c"/>
<circle cx="865" cy="502" r="8" class="c"/><circle cx="891" cy="502" r="8" class="c"/><circle cx="918" cy="502" r="8" class="c"/><circle cx="944.500" cy="502" r="8" class="c"/><circle cx="971" cy="502" r="8" class="c"/><circle cx="998" cy="502" r="8" class="c"/>
<text class="t" x="865" y="420">1</text><text class="t" x="891" y="420">1.5</text><text class="t" x="918" y="420">2</text><text class="t" x="944.500" y="420">3</text><text class="t" x="971" y="420">4</text><text class="t" x="998" y="420">5</text>
<text class="t" x="865" y="453">7</text><text class="t" x="891" y="453">10</text><text class="t" x="918" y="453">12</text><text class="t" x="944.500" y="453">15</text><text class="t" x="971" y="453">20</text><text class="t" x="998" y="453">25</text>
<text class="t" x="865" y="486">30</text><text class="t" x="891" y="486">40</text><text class="t" x="918" y="486">50</text><text class="t" x="944.500" y="486">70</text><text class="t" x="971" y="486">100</text><text class="t" x="998" y="486">150</text>
<text class="t" x="865" y="519">200</text><text class="t" x="891" y="519">300</text><text class="t" x="918" y="519">400</text><text class="t" x="944.500" y="519">500</text><text class="t" x="971" y="519">700</text><text class="t" x="998" y="519">1000</text>

<!-- status bar -->
<rect y="535" width="1024" height="14" fill="#232323"/>
<text x="4" y="546" class="l" style="font-size:7.800px" xml:space="preserve" textLength="568" lengthAdjust="spacingAndGlyphs">1400 * 1500 pixel   (5.9 * 6.4cm)   600 dpi   66 %   ( 1512, 571 )   Vẽ một đường thẳng bằng cách giữ phím Shift, Thay đổi cỡ cọ bằng cách giữ phím Ctrl, Alt và kéo</text>

<!-- taskbar -->
<rect y="549" width="1024" height="27" fill="url(#tb)"/>
<path d="M11 558.500l4-.6v4.600h-4zM16 557.800l6-.8v5.500h-6zM11 563.500h4v4.600l-4-.6zM16 563.500h6v5.500l-6-.8z" fill="#111"/>
<circle cx="49" cy="561" r="3.800" fill="none" stroke="#333"/><path d="M46 564l-3.500 4" stroke="#333" stroke-width="1.200"/>
<path d="M74 558h6l2 2h6v4H74z" fill="#f4c542"/><rect x="74" y="562" width="14" height="7" fill="#f5d76e"/><rect x="78" y="565" width="6" height="4" fill="#4aa3df"/>
<rect x="107" y="556" width="16" height="15" fill="#1a78b8"/><text x="115" y="565" style="font-size:5px;fill:#fff;text-anchor:middle;font-weight:bold">DELL</text>
<circle cx="148" cy="562" r="7.500" fill="#db4437"/><path d="M148 562l6.500 4a7.500 7.500 0 0 1-13 0z" fill="#0f9d58"/><circle cx="148" cy="562" r="3" fill="#4285f4" stroke="#fff"/><circle cx="154" cy="567" r="4" fill="#d9c0a8"/><rect x="150" y="564" width="8" height="3" fill="#333"/>
<circle cx="181" cy="562" r="7.500" fill="#db4437"/><path d="M181 562l6.500 4a7.500 7.500 0 0 1-13 0z" fill="#0f9d58"/><path d="M181 554.500a7.500 7.500 0 0 1 6.500 11.500l-6.500-4z" fill="#f4b400"/><circle cx="181" cy="562" r="3" fill="#4285f4" stroke="#fff"/>
<rect x="198" y="549" width="33" height="27" fill="#fff" fill-opacity=".55"/>
<circle cx="214" cy="563" r="4.800" fill="#e2644a"/><path d="M214 558.200a4.800 4.800 0 0 1 4.800 4.800H214z" fill="#5cbf6a"/><path d="M214 563h4.800a4.800 4.800 0 0 1-4.800 4.800z" fill="#3e8fd8"/><path d="M214 563v4.800a4.800 4.800 0 0 1-4.800-4.800z" fill="#f2c04a"/>
<rect x="241" y="556" width="13" height="6" fill="#d83a3a"/><rect x="241" y="562" width="13" height="7" fill="#222"/><text x="247.500" y="561" style="font-size:4.500px;fill:#fff;text-anchor:middle;font-weight:bold">SHOP</text><text x="247.500" y="568" style="font-size:5px;fill:#fff;text-anchor:middle;font-weight:bold">BẢT</text>
<circle cx="280" cy="562" r="8" fill="#0a0a0a"/><path d="M281 557v7a2 2 0 1 1-2-2M281 557c.5 2 2 3 3.500 3" fill="none" stroke="#fff" stroke-width="1.500"/>
<rect x="306" y="555" width="15" height="15" rx="5" fill="#fff" stroke="#3a8ef0"/><text x="313.500" y="565" style="font-size:5.500px;fill:#1a78ff;text-anchor:middle;font-weight:bold">Zalo</text>
<rect x="338" y="556" width="16" height="12" rx="3" fill="#e01b1b"/><path d="M344 559l5 3-5 3z" fill="#fff"/>
<path d="M379 554c3 4 7 7 7 11a7 6 0 0 1-14 0c0-4 4-7 7-11z" fill="#e06aa6"/><path d="M379 560c2 2 6 4 6 7a6 4 0 0 1-12 0c2-1 5-2 6-7z" fill="#f3a04c"/><path d="M376 556c1-1 2-2 3-2l3 3-3 3z" fill="#7a6ae0"/>
<circle cx="412" cy="562" r="7.500" fill="#1b9fdc"/><text x="412" y="566.500" style="font-size:11px;font-weight:bold;fill:#fff;text-anchor:middle">S</text>
<rect x="135" y="574" width="27" height="2" fill="#2b7fd0"/><rect x="198" y="574" width="33" height="2" fill="#2b7fd0"/><rect x="234" y="574" width="27" height="2" fill="#2b7fd0"/><rect x="400" y="574" width="27" height="2" fill="#2b7fd0"/>
<circle cx="706" cy="562" r="5.500" fill="#f4b73a"/><path d="M703 567a3 3 0 0 1 0-6 4 4 0 0 1 7 .5 3 3 0 0 1 1 5.500z" fill="#cfe0ee"/>
<text x="720" y="567" style="font-size:9.500px;fill:#333">90°F</text><text x="745" y="567" style="font-size:9.500px;fill:#333">Mostly sunny</text>
<path d="M812 566l4-4 4 4" fill="none" stroke="#333"/>
<path d="M829 558h6v9h-6zM832 561h4v3" fill="none" stroke="#555" stroke-width=".8"/>
<path d="M844 565a3 3 0 0 1 0-5 4 4 0 0 1 7 0 3 3 0 0 1 0 5z" fill="none" stroke="#333"/>
<path d="M860 566l7-7M860 566h1M863 566a3 3 0 0 0-3-3M866 566a6 6 0 0 0-6-6" fill="none" stroke="#666" stroke-width=".9"/>
<rect x="876" y="560" width="9" height="6" fill="#fff" stroke="#222"/><rect x="877" y="561" width="5" height="4" fill="#222"/>
<rect x="891" y="557" width="10" height="10" fill="#f7d8d8" stroke="#d44"/><text x="896" y="565.500" style="font-size:8px;font-weight:bold;fill:#c22;text-anchor:middle">V</text>
<path d="M907 560h2l2-2v8l-2-2h-2zM913 561l3 3M916 561l-3 3" fill="none" stroke="#555" stroke-width=".8"/>
<text x="925" y="567" style="font-size:7.500px;fill:#444">ENG</text>
<text x="966" y="559" style="font-size:8px;fill:#444;text-anchor:middle">12:02 PM</text>
<text x="966" y="571" style="font-size:8px;fill:#444;text-anchor:middle">7/17/2021</text>
<path d="M998 558h10v8h-6l-2 2v-2h-2z" fill="none" stroke="#444" stroke-width=".8"/>
</svg>
</body></html>
